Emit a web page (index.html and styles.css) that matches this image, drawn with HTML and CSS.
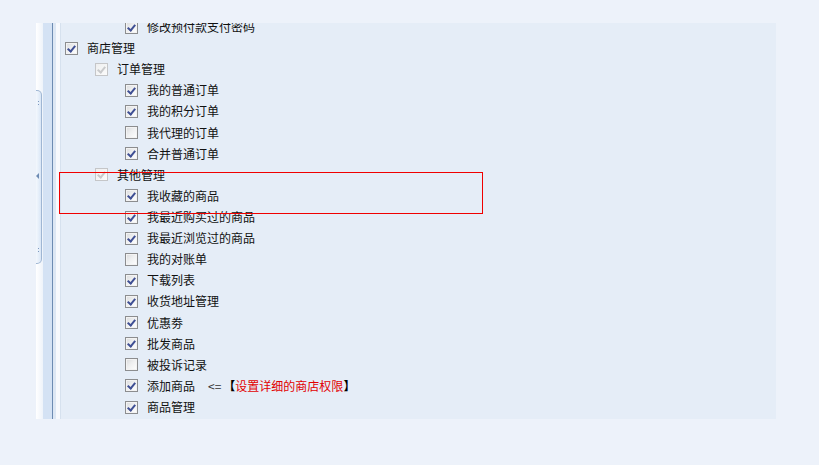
FILE: index.html
```html
<!DOCTYPE html>
<html lang="zh-CN">
<head>
<meta charset="utf-8">
<title>权限</title>
<link rel="stylesheet" href="styles.css">
</head>
<body>
<div class="frame">
  <div class="gutter">
    <div class="g1">
      <div class="handle">
        <span class="grip grip-top"></span>
        <span class="arrow"></span>
        <span class="grip grip-bottom"></span>
      </div>
    </div>
    <div class="g2"></div>
    <div class="g3"></div>
    <div class="g4"></div>
    <div class="g5"></div>
    <div class="g6"></div>
  </div>
  <div class="panel">
    <div class="tree">
      <div class="row l3"><span class="cb on"></span><span class="t">修改预付款支付密码</span></div>
      <div class="row l1"><span class="cb on"></span><span class="t">商店管理</span></div>
      <div class="row l2"><span class="cb dis"></span><span class="t">订单管理</span></div>
      <div class="row l3"><span class="cb on"></span><span class="t">我的普通订单</span></div>
      <div class="row l3"><span class="cb on"></span><span class="t">我的积分订单</span></div>
      <div class="row l3"><span class="cb"></span><span class="t">我代理的订单</span></div>
      <div class="row l3"><span class="cb on"></span><span class="t">合并普通订单</span></div>
      <div class="row l2"><span class="cb dis"></span><span class="t">其他管理</span></div>
      <div class="row l3"><span class="cb on"></span><span class="t">我收藏的商品</span></div>
      <div class="row l3"><span class="cb on"></span><span class="t">我最近购买过的商品</span></div>
      <div class="row l3"><span class="cb on"></span><span class="t">我最近浏览过的商品</span></div>
      <div class="row l3"><span class="cb"></span><span class="t">我的对账单</span></div>
      <div class="row l3"><span class="cb on"></span><span class="t">下载列表</span></div>
      <div class="row l3"><span class="cb on"></span><span class="t">收货地址管理</span></div>
      <div class="row l3"><span class="cb on"></span><span class="t">优惠劵</span></div>
      <div class="row l3"><span class="cb on"></span><span class="t">批发商品</span></div>
      <div class="row l3"><span class="cb"></span><span class="t">被投诉记录</span></div>
      <div class="row l3"><span class="cb on"></span><span class="t">添加商品</span><span class="hint"><span class="arr">&lt;=</span><span class="br">【</span><span class="red">设置详细的商店权限</span><span class="br">】</span></span></div>
      <div class="row l3"><span class="cb on"></span><span class="t">商品管理</span></div>
    </div>
  </div>
  <div class="mark"></div>
</div>
</body>
</html>
```

FILE: styles.css
```css
html, body {
  margin: 0;
  padding: 0;
}
body {
  background: #edf2fa;
  width: 819px;
  height: 465px;
  overflow: hidden;
  font-family: "Noto Sans CJK SC", "Noto Sans", sans-serif;
  font-size: 12px;
  color: #111;
}
.frame {
  position: relative;
  display: flex;
  margin: 23px 0 0 36px;
  width: 740px;
  height: 396px;
}
.gutter {
  display: flex;
  flex: none;
}
.g1 {
  position: relative;
  width: 7px;
  background: linear-gradient(90deg, #ffffff, #eef3fa);
}
.g2 { width: 9px; background: #d4e2f4; }
.g3 { width: 1px; background: #6d8bb2; }
.g4 { width: 3px; background: #dde7f4; }
.g5 { width: 4px; background: #f7f9fd; }
.g6 { width: 1px; background: #d6e1ee; }

.handle {
  position: absolute;
  left: 0;
  top: 67px;
  width: 5px;
  height: 172px;
  border: 1px solid #9fb6d3;
  border-left: none;
  border-radius: 0 5px 5px 0;
  background: linear-gradient(90deg, #f4f8fd, #d9e6f6);
}
.grip {
  position: absolute;
  left: 1px;
  width: 3px;
  height: 7px;
  background-image: radial-gradient(circle, #7d98bf 0.8px, transparent 1px);
  background-size: 3px 3px;
}
.grip-top { top: 9px; }
.grip-bottom { bottom: 9px; }
.arrow {
  position: absolute;
  left: 0;
  top: 82px;
  width: 0;
  height: 0;
  border-top: 3px solid transparent;
  border-bottom: 3px solid transparent;
  border-right: 3px solid #6e8bb3;
}

.panel {
  position: relative;
  flex: 1;
  background: #e5edf7;
  overflow: hidden;
}
.tree {
  margin-top: -6.5px;
}
.row {
  display: flex;
  align-items: center;
  height: 21.11px;
  white-space: nowrap;
}
.l1 { padding-left: 4px; }
.l2 { padding-left: 34px; }
.l3 { padding-left: 64px; }
.t {
  margin-left: 9px;
  line-height: 14px;
}
.cb {
  position: relative;
  flex: none;
  box-sizing: border-box;
  width: 13px;
  height: 13px;
  border: 1px solid #8c8d8f;
  background: linear-gradient(135deg, #d9dadc 0%, #eeeff0 45%, #ffffff 100%);
  box-shadow: inset 0 0 0 1px #f3f3f3;
}
.cb.on::after {
  content: "";
  position: absolute;
  left: 2.5px;
  top: 1px;
  width: 3px;
  height: 6px;
  border-right: 2px solid #3f4f94;
  border-bottom: 2px solid #3f4f94;
  transform: rotate(40deg);
  transform-origin: center;
}
.cb.dis {
  border-color: #c5c6c8;
  background: linear-gradient(135deg, #eeeff0, #fbfbfb);
  box-shadow: none;
}
.cb.dis::after {
  content: "";
  position: absolute;
  left: 3px;
  top: 1px;
  width: 3px;
  height: 6px;
  border-right: 2px solid #c9cacc;
  border-bottom: 2px solid #c9cacc;
  transform: rotate(40deg);
}
.hint {
  margin-left: 13px;
  line-height: 14px;
}
.arr { color: #333; margin-right: 2px; }
.br { color: #000; font-weight: bold; }
.red { color: #e20000; }

.mark {
  position: absolute;
  left: 23px;
  top: 149px;
  width: 424px;
  height: 42px;
  box-sizing: border-box;
  border: 1px solid #f00000;
}
```
